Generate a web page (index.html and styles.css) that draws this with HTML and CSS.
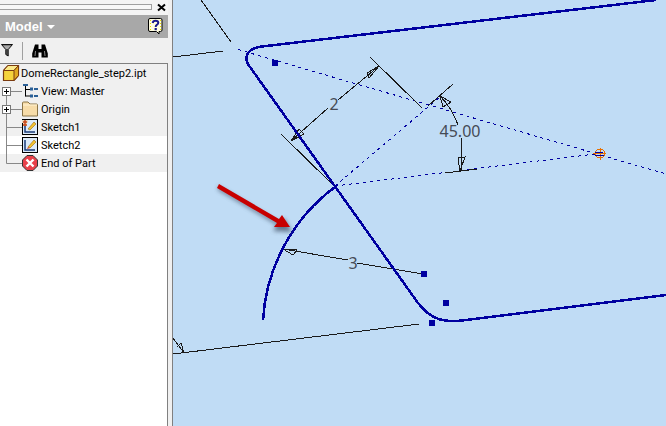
FILE: index.html
```html
<!DOCTYPE html>
<html>
<head>
  <meta charset="utf-8">
  <title>Model</title>
  <link rel="stylesheet" href="styles.css">
</head>
<body>
<div class="app">
  <div class="sidebar">
    <div class="grip-strip">
      <div class="grip"></div>
      <svg class="close" width="9" height="9" viewBox="0 0 9 9"><path d="M1 1.500L8 7.500M8 1.500L1 7.500" stroke="#000" stroke-width="2"/></svg>
    </div>
    <div class="panel-head">
      <span class="panel-title">Model</span>
      <span class="caret"></span>
      <svg class="help" width="15" height="17" viewBox="0 0 15 17">
        <path d="M2 .5H12.500Q14 .5 14 2V12Q14 13.500 12.500 13.500H11V16L8.500 13.500H2Q.5 13.500 .5 12V2Q.5 .5 2 .5Z" fill="#fffde0" stroke="#000"/>
        <path d="M2 2h1v1h-1zM2 5h1v1h-1zM2 8h1v1h-1zM2 11h1v1h-1zM12 2h1v1h-1zM12 5h1v1h-1zM12 8h1v1h-1zM12 11h1v1h-1z" fill="#e8d800"/>
        <path d="M4.700 5Q5 2.700 7.500 2.700Q10.300 2.700 10.300 4.800Q10.300 6 8.800 6.900Q7.700 7.600 7.700 9" fill="none" stroke="#1a1a8c" stroke-width="2"/>
        <rect x="6.600" y="10" width="2.200" height="2.200" fill="#1a1a8c"/>
      </svg>
    </div>
    <div class="toolbar">
      <svg width="12" height="13" viewBox="0 0 12 13"><path d="M.5 .5H11.500L7.200 5.500V12L4.800 10.500V5.500Z" fill="#555" stroke="#111"/><path d="M2 1.500H10L7 5H5Z" fill="#aaa"/></svg>
      <span class="tool-sep"></span>
      <svg width="16" height="14" viewBox="0 0 16 14"><path d="M3 .5H6.500V5H9.500V.5H13L15.800 9.500V13.500H9.500V8.500H6.500V13.500H.2V9.500Z" fill="#000"/><path d="M3.500 7L3 12M12.500 7L13 12" stroke="#888"/></svg>
    </div>
    <div class="tree">
      <div class="tree-row shaded">
        <svg class="node-icon first" width="18" height="18" viewBox="0 0 18 18">
          <path d="M1.500 6.500L6 1.500H16.500V11.500L12 16.500H1.500Z" fill="#f5d33c" stroke="#7a3b10" stroke-width="1.200"/>
          <path d="M6 1.500H16.500L12 6.500H1.500Z" fill="#fbe98a" stroke="#7a3b10"/>
          <path d="M12 6.500V16.500L16.500 11.500V1.500Z" fill="#e0a820" stroke="#7a3b10"/>
        </svg>
        <span class="node-label tight">DomeRectangle_step2.ipt</span>
      </div>
      <div class="tree-row shaded">
        <svg class="gutter" width="22" height="18" viewBox="0 0 22 18"><path d="M6.500 5V18M11 9.500H22" stroke="#888"/><rect x="2.500" y="5.500" width="8" height="8" fill="#fff" stroke="#777"/><path d="M4 9.500H9M6.500 7V12" stroke="#000"/></svg>
        <svg class="node-icon" width="16" height="16" viewBox="0 0 16 16">
          <path d="M3.500 3V13.500M3.500 6.500H8M3.500 13H8" stroke="#000"/>
          <path d="M1 1H6V3H1zM8 4.500H11V7.500H8zM12 5H16V7H12zM8 11.500H11V14.500H8zM12 12H16V14H12z" fill="#2a5f96"/>
        </svg>
        <span class="node-label">View: Master</span>
      </div>
      <div class="tree-row shaded">
        <svg class="gutter" width="22" height="18" viewBox="0 0 22 18"><path d="M6.500 0V18M11 9.500H22" stroke="#888"/><rect x="2.500" y="5.500" width="8" height="8" fill="#fff" stroke="#777"/><path d="M4 9.500H9M6.500 7V12" stroke="#000"/></svg>
        <svg class="node-icon" width="16" height="16" viewBox="0 0 16 16">
          <path d="M.5 15V2Q.5 1 1.500 1H6L8 3H14.500Q15.500 3 15.500 4V15Z" fill="#f7dca8" stroke="#8a7446"/>
          <path d="M1 4H15" stroke="#fff3d6"/>
        </svg>
        <span class="node-label">Origin</span>
      </div>
      <div class="tree-row shaded">
        <svg class="gutter" width="22" height="18" viewBox="0 0 22 18"><path d="M6.500 0V18M6.500 9.500H22" stroke="#888"/></svg>
        <svg class="node-icon" width="16" height="16" viewBox="0 0 16 16">
          <rect x=".5" y=".5" width="15" height="15" fill="#dbeafa" stroke="#000"/>
          <path d="M3 4V13H13" fill="none" stroke="#1b3d7a" stroke-width="1.500"/>
          <path d="M6 10L12 3L14 5L8 11Z" fill="#f2c230" stroke="#9a6a10" stroke-width=".6"/>
          <path d="M0 1H6V4H5V7H1V4H0Z" fill="#e8d8c0"/>
          <path d="M1 3H5M3 1V7M1 6H5" stroke="#c8481a" stroke-width="1.500"/>
        </svg>
        <span class="node-label">Sketch1</span>
      </div>
      <div class="tree-row">
        <svg class="gutter" width="22" height="18" viewBox="0 0 22 18"><path d="M6.500 0V18M6.500 9.500H22" stroke="#888"/></svg>
        <svg class="node-icon" width="16" height="16" viewBox="0 0 16 16">
          <rect x=".5" y=".5" width="15" height="15" fill="#dbeafa" stroke="#000"/>
          <path d="M3 3V13H13" fill="none" stroke="#1b3d7a" stroke-width="1.500"/>
          <path d="M6 10L12 3L14 5L8 11Z" fill="#f2c230" stroke="#9a6a10" stroke-width=".6"/>
          <path d="M6 10L5 12L8 11Z" fill="#d04020"/>
        </svg>
        <span class="node-label">Sketch2</span>
      </div>
      <div class="tree-row shaded">
        <svg class="gutter" width="22" height="18" viewBox="0 0 22 18"><path d="M6.500 0V9.500H22" fill="none" stroke="#888"/></svg>
        <svg class="node-icon" width="16" height="16" viewBox="0 0 16 16">
          <path d="M5 .5H11L15.500 5V11L11 15.500H5L.5 11V5Z" fill="#e8404a" stroke="#333"/>
          <path d="M4.500 4.500L11.500 11.500M11.500 4.500L4.500 11.500" stroke="#fff" stroke-width="2.400"/>
        </svg>
        <span class="node-label">End of Part</span>
      </div>
    </div>
  </div>
  <div class="splitter"></div>
  <div class="canvas">
    <svg class="sketch" width="493" height="426" viewBox="173 0 493 426">
      <defs>
        <filter id="soft" x="-20%" y="-20%" width="140%" height="140%"><feGaussianBlur stdDeviation="2"/></filter>
      </defs>

      <!-- construction lines -->
      <g class="dashed">
        <path d="M238 49.500L666 174"/>
        <path d="M335 186L441 96"/>
        <path d="M335 186L595 154"/>
      </g>

      <!-- dimensions -->
      <g class="dim">
        <path d="M201 0L231 42"/>
        <path d="M173 57L223 51"/>
        <path d="M370 57L422 108"/>
        <path d="M281 134L333 185"/>
        <path d="M291 141L328 108M338 100L379 66"/>
        <path d="M379 66L367 73L369 78Z"/>
        <path d="M291 141L299 129L304 134Z"/>
        <path d="M453 84L428 106"/>
        <path d="M440 96Q452 108 458 125"/>
        <path d="M440 96L443 107L451 102Z"/>
        <path d="M461 138V171"/>
        <path d="M460 171L458 158L465 157Z"/>
        <path d="M445 173L477 169"/>
        <path d="M283 249L348 260M357 263L423 274"/>
        <path d="M283 249L297 250L293 255Z"/>
        <path d="M173 354L419 324"/>
        <path d="M184 353L173 338M184 353L181 343L177 347"/>
      </g>
      <text class="dim-text" x="334" y="110" text-anchor="middle">2</text>
      <text class="dim-text" x="460" y="137" text-anchor="middle">45.00</text>
      <text class="dim-text" x="353" y="269" text-anchor="middle">3</text>

      <!-- sketch profile -->
      <g class="profile">
        <path d="M656 0L262 46.500Q252 47.500 248 53Q244 59 250 67L418 303Q428 316 440 319.500Q450 322 462 320.500L666 295"/>
        <path d="M263 320A179 179 0 0 1 335 187"/>
      </g>
      <rect class="point" x="272" y="60" width="6" height="6"/>
      <rect class="point" x="421" y="271" width="6" height="6"/>
      <rect class="point" x="443" y="300" width="6" height="6"/>
      <rect class="point" x="429" y="320" width="6" height="6"/>

      <!-- center point -->
      <g class="target">
        <circle cx="600" cy="153.500" r="4.500"/>
        <path d="M600.500 148V160M593 153.500H606"/>
      </g>
      <path class="target-mark" d="M595 152.500H603M595 155.500H603"/>

      <!-- callout arrow -->
      <path class="arrow-shadow" filter="url(#soft)" d="M218 190L277 225L273 231L292 232L284 218L280 223L218 186Z"/>
      <path class="arrow" d="M219 184L279 219L282 215L290 227L274 227L277 223L217 188Z"/>
    </svg>
  </div>
</div>
</body>
</html>
```

FILE: styles.css
```css
html, body {
  margin: 0;
  height: 100%;
  overflow: hidden;
  background: #fff;
  font-family: Roboto, sans-serif;
}

.app {
  display: flex;
  height: 426px;
}

.sidebar {
  width: 168px;
  display: flex;
  flex-direction: column;
  flex-shrink: 0;
}

.grip-strip {
  height: 15px;
  display: flex;
  align-items: center;
  gap: 5px;
  box-sizing: border-box;
  padding: 0 2px 1px 0;
  background: #f4f4f4;
}

.grip {
  flex: 1;
  height: 4px;
  background: #f8f8f8;
  border-top: 1px solid #a0a0a0;
  border-bottom: 1px solid #a0a0a0;
  border-right: 1px solid #a0a0a0;
}

.panel-head {
  height: 23px;
  display: flex;
  align-items: center;
  padding: 0 3px 0 5px;
  background: #a8a8a8;
}

.panel-title {
  color: #fff;
  font-family: "Liberation Sans", sans-serif;
  font-size: 13px;
  font-weight: 700;
}

.caret {
  width: 0;
  height: 0;
  margin-left: 4px;
  border-left: 4px solid transparent;
  border-right: 4px solid transparent;
  border-top: 4px solid #fff;
}

.help {
  margin-left: auto;
  margin-right: 2px;
}

.toolbar {
  height: 25px;
  display: flex;
  align-items: center;
  padding-left: 1px;
  background: #f0f0f0;
}

.tool-sep {
  width: 1px;
  height: 18px;
  margin: 0 9px;
  background: #a0a0a0;
}

.tree {
  flex: 1;
  background: #fff;
  border-top: 1px solid #808080;
  border-right: 1px solid #808080;
}

.tree-row {
  height: 18px;
  display: flex;
  align-items: center;
}

.tree-row.shaded {
  background: #f0f0f0;
}

.gutter {
  flex-shrink: 0;
}

.node-icon {
  flex-shrink: 0;
}

.node-icon.first {
  margin-left: 2px;
}

.node-label {
  margin-left: 3px;
  padding-top: 1px;
  font-size: 11px;
  color: #000;
  white-space: nowrap;
}

.node-label.tight {
  margin-left: 1px;
}

.splitter {
  width: 4px;
  flex-shrink: 0;
  background: #f0f0f0;
  border-right: 1px solid #808080;
}

.canvas {
  flex: 1;
  background: #c0dcf5;
}

.sketch {
  display: block;
}

.dashed path {
  fill: none;
  stroke: #0000a0;
  stroke-width: 1;
  stroke-dasharray: 3 4;
  shape-rendering: crispEdges;
}

.dim path {
  fill: none;
  stroke: #1a1a1a;
  stroke-width: 1;
  shape-rendering: crispEdges;
}

.dim-text {
  font-family: "Noto Sans", sans-serif;
  font-size: 16px;
  fill: #454b55;
}

.profile path {
  fill: none;
  stroke: #0000a0;
  stroke-width: 2.500;
  shape-rendering: crispEdges;
}

.point {
  fill: #0000a0;
}

.target circle,
.target path {
  fill: none;
  stroke: #e87000;
  stroke-width: 1;
  shape-rendering: crispEdges;
}

.target-mark {
  fill: none;
  stroke: #0000a0;
  stroke-width: 1;
}

.arrow {
  fill: #c80000;
}

.arrow-shadow {
  fill: #46566c;
  opacity: 0.75;
}
```
